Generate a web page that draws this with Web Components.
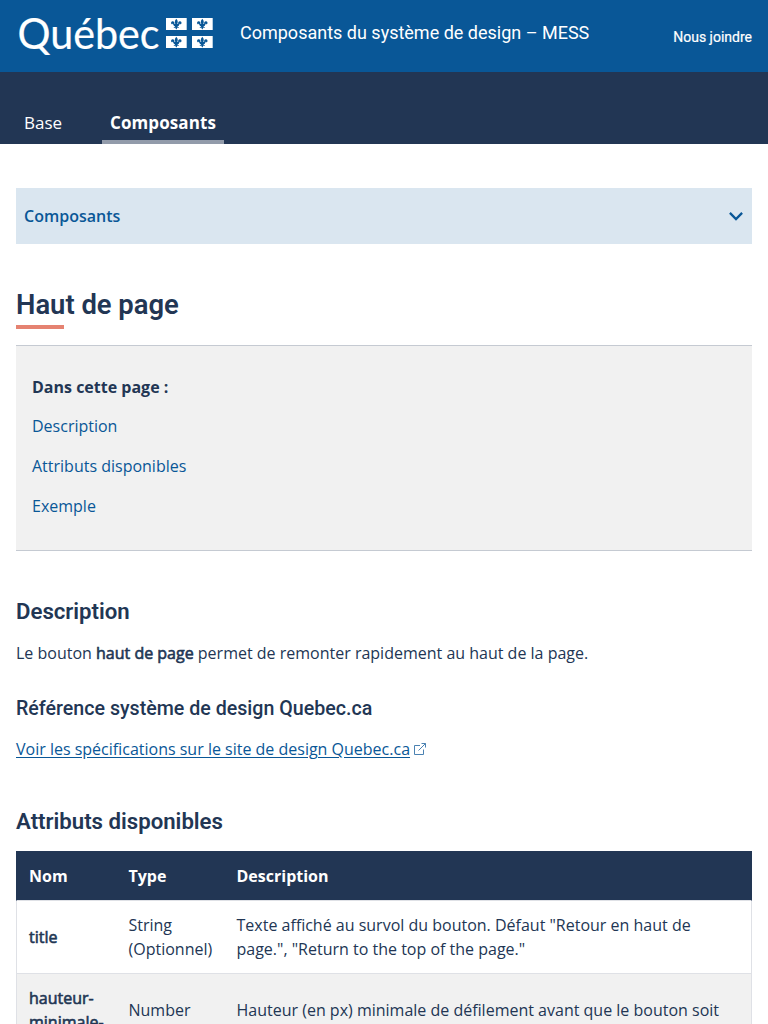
<!DOCTYPE html>
<html lang="fr">
<head>
<meta charset="utf-8">
<title>Haut de page</title>
<style>
html,body{margin:0;height:1024px;overflow:hidden;background:#fff}
body{font:400 16px/24px "Open Sans",sans-serif;color:#223654}
main{padding:44px 16px 0}
</style>
</head>
<body>
<mess-header contact="Nous joindre">Composants du système de design – MESS</mess-header>
<mess-nav><mess-tab>Base</mess-tab><mess-tab active>Composants</mess-tab></mess-nav>
<main>
<mess-menu>Composants</mess-menu>
<mess-title level="1" style="margin-top:42px">Haut de page</mess-title>
<mess-toc style="margin-top:16px"><span slot="title">Dans cette page :</span><mess-link>Description</mess-link><mess-link>Attributs disponibles</mess-link><mess-link>Exemple</mess-link></mess-toc>
<mess-title level="2" style="margin-top:46px">Description</mess-title>
<mess-text style="margin-top:16px">Le bouton <mess-strong>haut de page</mess-strong> permet de remonter rapidement au haut de la page.</mess-text>
<mess-title level="3" style="margin-top:32px">Référence système de design Quebec.ca</mess-title>
<mess-text style="margin-top:16px"><mess-link external>Voir les spécifications sur le site de design Quebec.ca</mess-link></mess-text>
<mess-title level="2" style="margin-top:46px">Attributs disponibles</mess-title>
<mess-table style="margin-top:16px"></mess-table>
</main>
<script>
const define=(name,html)=>{
  const t=document.createElement('template');
  t.innerHTML=html;
  customElements.define(name,class extends HTMLElement{
    constructor(){super();this.attachShadow({mode:'open'}).append(t.content.cloneNode(true));}
    connectedCallback(){
      const c=this.shadowRoot.querySelector('[data-contact]');
      if(c)c.textContent=this.getAttribute('contact');
    }
  });
};
define('mess-logo',`<style>:host{display:block;width:194px;height:40px}svg{display:block}</style>
<svg width="194" height="44" viewBox="19 15 194 44" fill="#fff" overflow="visible">
<text x="17.500" y="48.500" font-family="Lato,sans-serif" font-size="43" textLength="142" lengthAdjust="spacingAndGlyphs" stroke="#fff" stroke-width=".2">Québec</text>
<defs><g id="flag"><path d="M0 0h20.700v12H0z"/><path fill="#095797" d="M10.300.8c1.400 1.500 1.900 3 1 5.200h.9c-.4-2 .7-3.100 2-2.800 1.600.4 1.900 2.600.3 3.300 0-.9-.8-1.100-1-.4 0 .5-.2.9-.7 1.100v.9h-1.300c.1.900.8 1.100 1.500.8-.3 1-1.200 1-1.700.5-.1.900-.4 1.400-1 2-.600-.600-.900-1.100-1-2-.5.5-1.400.5-1.700-.5.700.3 1.400.1 1.500-.8H7.800v-.9c-.5-.2-.7-.6-.7-1.100-.2-.7-1-.5-1 .4-1.600-.7-1.300-2.900.3-3.300 1.300-.3 2.400.8 2 2.800h.9c-.9-2.200-.4-3.700 1-5.200z"/></g></defs>
<use href="#flag" x="166" y="18"/><use href="#flag" x="192" y="18"/><use href="#flag" x="166" y="36"/><use href="#flag" x="192" y="36"/>
</svg>`);
define('mess-header',`<style>:host{display:flex;box-sizing:border-box;height:72px;padding:0 16px 0 19px;background:#095797;color:#fff;font-family:Roboto,sans-serif}
mess-logo{margin-top:15px}.t{margin:21px auto 0 27px;font-size:18px;font-weight:400}.c{margin-top:25px;font-size:14px;-webkit-text-stroke:.2px currentColor}</style>
<mess-logo></mess-logo><div class="t"><slot></slot></div><div class="c" data-contact></div>`);
define('mess-nav',`<style>:host{display:flex;box-sizing:border-box;height:72px;padding:0 16px;gap:32px;align-items:flex-end;background:#223654;color:#fff}</style><slot></slot>`);
define('mess-tab',`<style>:host{display:block;font-size:17px;padding:0 8px 5px;border-bottom:4px solid transparent}:host([active]){font-weight:700;letter-spacing:.08px;border-color:#929baa}</style><slot></slot>`);
define('mess-menu',`<style>:host{display:flex;align-items:center;justify-content:space-between;height:56px;padding:0 8px;background:#dae6f0;color:#095797;font-weight:600}svg{display:block}</style>
<slot></slot><svg width="16" height="16" viewBox="0 0 16 16" fill="none" stroke="#095797" stroke-width="2.3"><path d="M1.900 4.900 8 11l6.100-6.100"/></svg>`);
define('mess-title',`<style>:host{display:block;font-family:Roboto,sans-serif;font-weight:500}
:host([level="1"]){box-sizing:border-box;height:43px;font-size:27.400px;line-height:38px;font-weight:600;background:linear-gradient(#e58271,#e58271) left bottom/48px 4px no-repeat}
:host([level="2"]){font-size:22.200px;line-height:28px;font-weight:600}:host([level="3"]){font-size:19.640px;line-height:24px}</style><slot></slot>`);
define('mess-text',`<style>:host{display:block}</style><slot></slot>`);
define('mess-strong',`<style>:host{display:inline;-webkit-text-stroke:.6px currentColor}</style><slot></slot>`);
define('mess-link',`<style>:host{color:#095797}:host([external]) span{text-decoration:underline;text-underline-offset:2px}svg{display:none}:host([external]) svg{display:inline-block;margin-left:4px;vertical-align:0}</style><span><slot></slot></span><svg width="12" height="12" viewBox="0 0 12 12" fill="none" stroke="#4b82b2"><path d="M6 2.500H.5v9h9V6.500M7.500.5h4v4M11.500.5 4.500 7.500"/></svg>`);
define('mess-toc',`<style>:host{display:flex;flex-direction:column;gap:16px;box-sizing:border-box;height:206px;padding:29px 16px;background:#f1f1f1;border:solid #c5cad2;border-width:1px 0}.h{font-weight:700;margin-bottom:-1px}</style><div class="h"><slot name="title"></slot></div><slot></slot>`);
define('mess-table',`<style>:host{display:block}
.r{display:grid;grid-template-columns:99.500px 108px 1fr;box-sizing:border-box;border:1px solid #dfe1e6;border-top:0;align-items:center;padding:12px 0}
.r>*{padding:0 12px}.h{background:#223654;color:#fff;font-weight:700;border-color:#223654;border-bottom:1px solid #dfe1e6;padding:13px 0 12px;height:50px}
.g{background:#f1f1f1;height:97px;align-items:start}.g .n{margin-top:12px}mess-strong{display:block}</style>
<div class="r h"><div>Nom</div><div>Type</div><div>Description</div></div>
<div class="r"><mess-strong>title</mess-strong><div>String<br>(Optionnel)</div><div>Texte affiché au survol du bouton. Défaut "Retour en haut de page.", "Return to the top of the page."</div></div>
<div class="r g"><mess-strong>hauteur-<br>minimale-</mess-strong><div class="n">Number</div><div class="n">Hauteur (en px) minimale de défilement avant que le bouton soit</div></div>`);
</script>
</body>
</html>
